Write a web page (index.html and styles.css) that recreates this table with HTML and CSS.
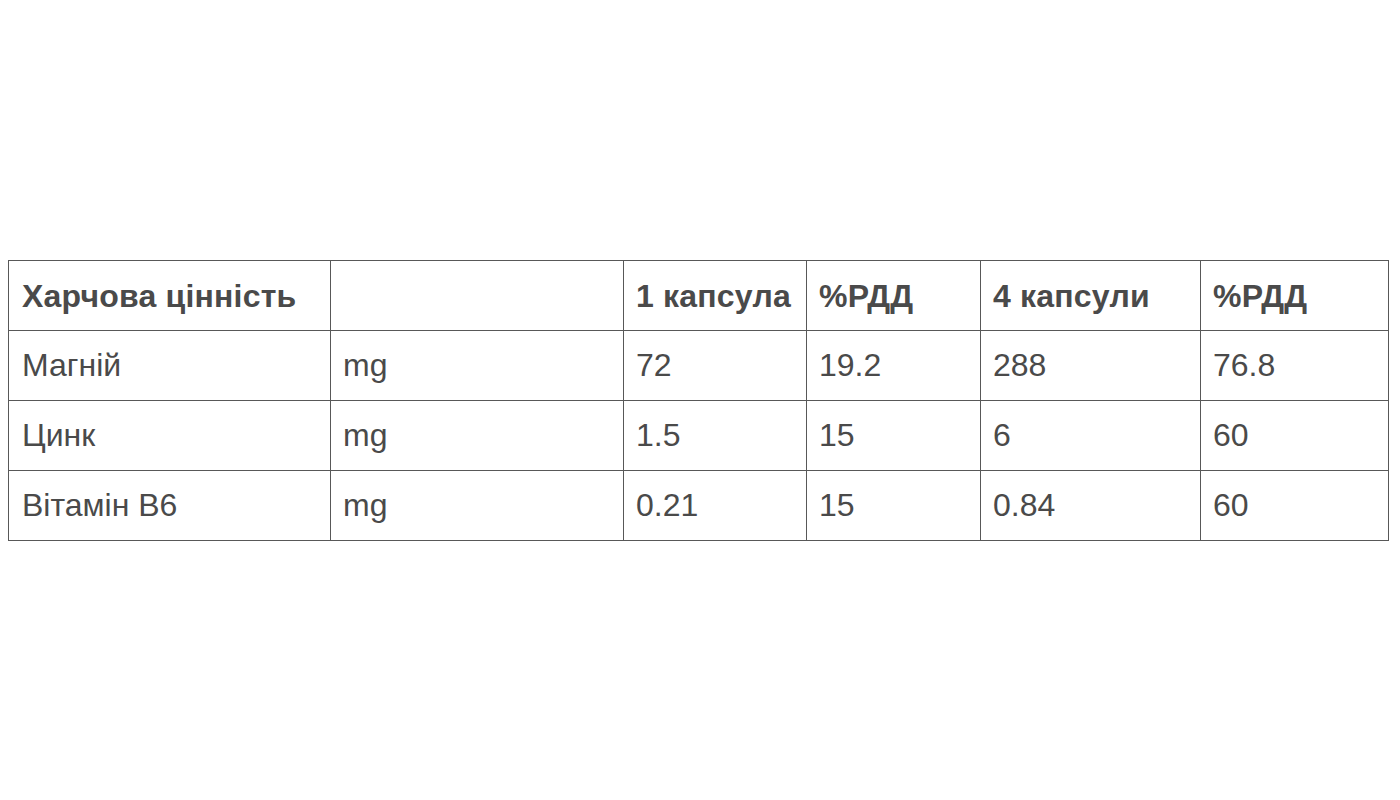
FILE: index.html
```html
<!DOCTYPE html>
<html lang="uk">
<head>
<meta charset="utf-8">
<title>Харчова цінність</title>
<link rel="stylesheet" href="styles.css">
</head>
<body>
<main class="page">
<table class="nutrition">
  <colgroup>
    <col class="c1"><col class="c2"><col class="c3"><col class="c4"><col class="c5"><col class="c6">
  </colgroup>
  <thead>
    <tr><th>Харчова цінність</th><th></th><th>1 капсула</th><th>%РДД</th><th>4 капсули</th><th>%РДД</th></tr>
  </thead>
  <tbody>
    <tr><td>Магній</td><td>mg</td><td>72</td><td>19.2</td><td>288</td><td>76.8</td></tr>
    <tr><td>Цинк</td><td>mg</td><td>1.5</td><td>15</td><td>6</td><td>60</td></tr>
    <tr><td>Вітамін B6</td><td>mg</td><td>0.21</td><td>15</td><td>0.84</td><td>60</td></tr>
  </tbody>
</table>
</main>
</body>
</html>
```
FILE: styles.css
```css
html, body {
  margin: 0;
  background: #fff;
}
body {
  font-family: "Liberation Sans", Arial, sans-serif;
  color: #4a4a4a;
}
.page {
  height: 800px;
  display: flex;
  align-items: center;
  padding: 0 8px;
  box-sizing: border-box;
}
.nutrition {
  width: 1381px;
  border-collapse: collapse;
  table-layout: fixed;
}
.c1 { width: 322px; }
.c2 { width: 293px; }
.c3 { width: 183px; }
.c4 { width: 174px; }
.c5 { width: 220px; }
.c6 { width: auto; }
.nutrition th,
.nutrition td {
  border: 1px solid #585858;
  height: 70px;
  padding: 0 12px;
  font-size: 32px;
  text-align: left;
  vertical-align: middle;
  box-sizing: border-box;
  white-space: nowrap;
}
.nutrition th:first-child,
.nutrition td:first-child {
  padding-left: 13px;
}
.nutrition th {
  font-weight: bold;
  padding-top: 2px;
  letter-spacing: 0.2px;
}
.nutrition td {
  font-weight: normal;
}
```
